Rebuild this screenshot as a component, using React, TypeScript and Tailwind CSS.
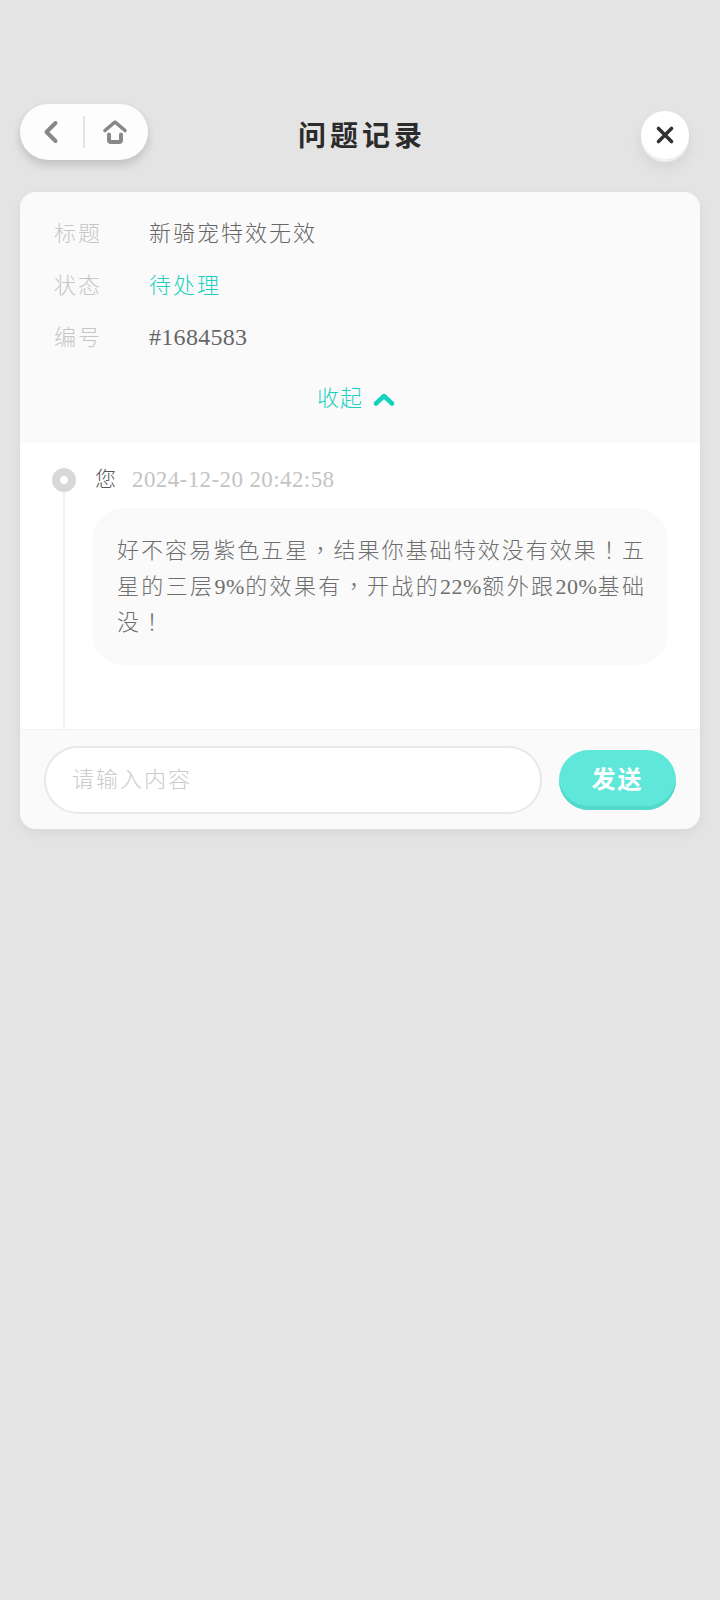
const cjk = "font-['Liberation_Serif','Noto_Sans_CJK_SC',serif]";

// punctuation sits mid-cell in the reference, which is what the TC cut does
function Punct({ children }: { children: string }) {
  return <span className="font-['Noto_Sans_CJK_TC',serif] leading-[0]">{children}</span>;
}

// digits run tighter than the CJK text around them
function Num({ children }: { children: string }) {
  return <span className="tracking-[0.5px]">{children}</span>;
}

function InfoRow({ label, children }: { label: string; children: React.ReactNode }) {
  return (
    <div className="flex h-[52px] items-center">
      <span className="w-[95px] text-[22px] font-light tracking-[2px] text-[#c6c6c6]">{label}</span>
      {children}
    </div>
  );
}

export default function App() {
  return (
    <div className={`min-h-[1600px] bg-[#e4e4e4] pt-[104px] ${cjk}`}>
      {/* Top bar */}
      <div className="flex items-start pl-5 pr-[31px]">
        <div className="flex h-14 w-32 items-center rounded-full bg-[#fdfdfd] shadow-[0_5px_10px_rgba(0,0,0,0.16)]">
          <div className="flex w-[63px] justify-center pr-[2px]">
            <svg width="16" height="24" viewBox="0 0 16 24" fill="none" stroke="#888888" strokeWidth="4" strokeLinecap="round" strokeLinejoin="round">
              <path d="M12.5 3 L3.5 12 L12.5 21" />
            </svg>
          </div>
          <div className="h-8 w-0.5 bg-[#e4e4e4]" />
          <div className="flex flex-1 justify-center pl-[1px] pr-1">
            <svg width="26" height="26" viewBox="0 0 26 26" fill="none" stroke="#888888" strokeLinecap="round" strokeLinejoin="round">
              <path d="M3 11.5 L13 3 L23 11.5" strokeWidth="3.6" />
              <path d="M7 15.5 V21 Q7 23 9 23 H17 Q19 23 19 21 V15.5" strokeWidth="4" />
            </svg>
          </div>
        </div>
        <h1 className="mt-[14px] flex-1 pr-[65px] text-center text-[28px] font-bold leading-[38px] tracking-[4px] text-[#2b2b2b]">
          问题记录
        </h1>
        <button className="mt-[7px] flex h-12 w-12 items-center justify-center rounded-full bg-white shadow-[0_3px_0_#efefef,0_8px_14px_rgba(0,0,0,0.08)]">
          <svg width="20" height="20" viewBox="0 0 20 20" fill="none" stroke="#333333" strokeWidth="3.6" strokeLinecap="round">
            <path d="M3.5 3.5 L16.5 16.5 M16.5 3.5 L3.5 16.5" />
          </svg>
        </button>
      </div>

      {/* Card */}
      <div className="mx-5 mt-8 overflow-hidden rounded-2xl bg-white shadow-[0_4px_12px_rgba(0,0,0,0.06)]">
        <div className="h-[251px] bg-[#fafafa] px-[34px] pt-[15px]">
          <InfoRow label="标题">
            <span className="text-[22px] font-light tracking-[2px] text-[#666666]">新骑宠特效无效</span>
          </InfoRow>
          <InfoRow label="状态">
            <span className="text-[22px] font-light tracking-[2px] text-[#1fd0c0]">待处理</span>
          </InfoRow>
          <InfoRow label="编号">
            <span className="text-[24px] tracking-[0.3px] text-[#666666]">#1684583</span>
          </InfoRow>
          <div className="mt-[21px] flex items-center justify-center gap-[10px] pr-[8px]">
            <span className="text-[22px] font-light leading-[30px] tracking-[1px] text-[#1fd0c0]">收起</span>
            <svg width="22" height="16" viewBox="0 0 22 16" fill="none" stroke="#14d2bd" strokeWidth="4.5" strokeLinecap="round" strokeLinejoin="round">
              <path d="M3 12.5 L11 5 L19 12.5" />
            </svg>
          </div>
        </div>

        <div className="flex h-[286px] pl-8 pr-8 pt-[25px]">
          <div className="flex w-6 flex-col items-center">
            <div className="flex h-6 w-6 shrink-0 items-center justify-center rounded-full bg-[#d8d8d8]">
              <div className="h-2 w-2 rounded-full bg-white" />
            </div>
            <div className="w-0.5 flex-1 bg-[#f0f0f0]" />
          </div>
          <div className="ml-4 flex-1">
            <div className="flex h-6 items-center pl-[3px]">
              <span className="text-[21px] font-light text-[#555555]">您</span>
              <span className="ml-[16px] text-[23px] tracking-[0.4px] text-[#c4c4c4]">2024-12-20 20:42:58</span>
            </div>
            <div className="mt-4 h-[157px] rounded-[32px] bg-[#fafafa] pl-[25px] pr-[22px] pt-[25px]">
              <p className="text-justify text-[22px] font-light leading-9 tracking-[2px] text-[#6e6e6e]">
                好不容易紫色五星<Punct>，</Punct>结果你基础特效没有效果<Punct>！</Punct>五星的三层<Num>9%</Num>的效果有<Punct>，</Punct>开战的<Num>22%</Num>额外跟<Num>20%</Num>基础没<Punct>！</Punct>
              </p>
            </div>
          </div>
        </div>

        {/* Input bar */}
        <div className="flex h-[100px] items-center border-t border-[#f2f2f2] bg-[#fafafa] pl-6 pr-6">
          <input
            placeholder="请输入内容"
            className="h-[68px] w-[498px] rounded-full border-2 border-[#e8e8e8] bg-white pl-[26px] text-[22px] font-light tracking-[2px] outline-none placeholder:text-[#cbcbcb]"
          />
          <button className="ml-[17px] h-[60px] w-[117px] rounded-full bg-[#5fe8da] text-[24px] font-bold tracking-[2px] text-white shadow-[inset_0_-4px_0_#52d9cb]">
            发送
          </button>
        </div>
      </div>
    </div>
  );
}
